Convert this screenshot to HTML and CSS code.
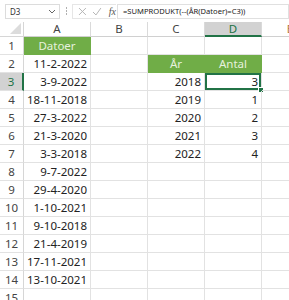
FILE: index.html
```html
<!DOCTYPE html>
<html>
<head>
<meta charset="utf-8">
<link rel="stylesheet" href="styles.css">
</head>
<body>
<div class="fbar">
  <div class="namebox"><span>D3</span>
    <svg class="chev" width="8" height="5" viewBox="0 0 8 5"><path d="M1 1 L4 4 L7 1" fill="none" stroke="#666" stroke-width="1"/></svg>
  </div>
  <div class="dots"><i></i><i></i><i></i></div>
  <div class="icons">
    <svg width="9" height="9" viewBox="0 0 9 9"><path d="M1 1 L8 8 M8 1 L1 8" stroke="#b5b5b5" stroke-width="1"/></svg>
    <svg width="10" height="9" viewBox="0 0 10 9"><path d="M1 5 L4 8 L9 1" fill="none" stroke="#b5b5b5" stroke-width="1"/></svg>
    <span class="fx">fx</span>
  </div>
  <div class="formula">=SUMPRODUKT(--(ÅR(Datoer)=C3))</div>
</div>
<div class="sheet">
  <div class="corner"><svg width="11" height="11" viewBox="0 0 11 11"><path d="M11 0 L11 11 L0 11 Z" fill="#dcdcdc"/></svg></div>
  <div class="ch">A</div><div class="ch">B</div><div class="ch">C</div><div class="ch sel">D</div><div class="ch e">E</div>

  <div class="rh">1</div><div class="c hd">Datoer</div><div class="c"></div><div class="c"></div><div class="c"></div><div class="c"></div>
  <div class="rh">2</div><div class="c r">11-2-2022</div><div class="c"></div><div class="c hd">År</div><div class="c hd">Antal</div><div class="c"></div>
  <div class="rh sel">3</div><div class="c r">3-9-2022</div><div class="c"></div><div class="c r">2018</div><div class="c r active">3<span class="handle"></span></div><div class="c"></div>
  <div class="rh">4</div><div class="c r">18-11-2018</div><div class="c"></div><div class="c r">2019</div><div class="c r">1</div><div class="c"></div>
  <div class="rh">5</div><div class="c r">27-3-2022</div><div class="c"></div><div class="c r">2020</div><div class="c r">2</div><div class="c"></div>
  <div class="rh">6</div><div class="c r">21-3-2020</div><div class="c"></div><div class="c r">2021</div><div class="c r">3</div><div class="c"></div>
  <div class="rh">7</div><div class="c r">3-3-2018</div><div class="c"></div><div class="c r">2022</div><div class="c r">4</div><div class="c"></div>
  <div class="rh">8</div><div class="c r">9-7-2022</div><div class="c"></div><div class="c"></div><div class="c"></div><div class="c"></div>
  <div class="rh">9</div><div class="c r">29-4-2020</div><div class="c"></div><div class="c"></div><div class="c"></div><div class="c"></div>
  <div class="rh">10</div><div class="c r">1-10-2021</div><div class="c"></div><div class="c"></div><div class="c"></div><div class="c"></div>
  <div class="rh">11</div><div class="c r">9-10-2018</div><div class="c"></div><div class="c"></div><div class="c"></div><div class="c"></div>
  <div class="rh">12</div><div class="c r">21-4-2019</div><div class="c"></div><div class="c"></div><div class="c"></div><div class="c"></div>
  <div class="rh">13</div><div class="c r">17-11-2021</div><div class="c"></div><div class="c"></div><div class="c"></div><div class="c"></div>
  <div class="rh">14</div><div class="c r">13-10-2021</div><div class="c"></div><div class="c"></div><div class="c"></div><div class="c"></div>
  <div class="rh">15</div><div class="c"></div><div class="c"></div><div class="c"></div><div class="c"></div><div class="c"></div>
</div>
</body>
</html>
```
FILE: styles.css
```css
html, body {
  margin: 0;
  padding: 0;
  background: #ffffff;
  overflow: hidden;
}
body {
  width: 289px;
  height: 300px;
  font-family: "Noto Sans", "Open Sans", sans-serif;
  color: #222;
}
.fbar {
  height: 22px;
  display: flex;
  align-items: center;
  background: #ffffff;
  box-sizing: border-box;
  padding-left: 5px;
}
.namebox {
  width: 55px;
  height: 15px;
  box-sizing: border-box;
  border: 1px solid #dcdcdc;
  display: flex;
  align-items: center;
  justify-content: space-between;
  padding: 0 3px 0 4px;
  font-size: 8px;
  color: #333;
}
.dots {
  display: flex;
  flex-direction: column;
  gap: 1px;
  margin: 0 5px 0 6px;
}
.dots i {
  display: block;
  width: 1px;
  height: 2px;
  background: #b0b0b0;
}
.icons {
  height: 15px;
  width: 44px;
  box-sizing: border-box;
  border: 1px solid #e6e6e6;
  border-right: none;
  display: flex;
  align-items: center;
  gap: 5px;
  padding-left: 5px;
}
.fx {
  font-family: "Liberation Serif", serif;
  font-style: italic;
  font-size: 10px;
  color: #555;
  margin-left: 2px;
}
.formula {
  flex: 1;
  height: 15px;
  box-sizing: border-box;
  border: 1px solid #e0e0e0;
  margin-left: 1px;
  font-size: 7.6px;
  line-height: 13px;
  padding-left: 5px;
  color: #222;
  white-space: nowrap;
}
.sheet {
  display: grid;
  grid-template-columns: 24px 67px 57px 57px 57px 57px;
  grid-template-rows: 15px repeat(15, 18px);
}
.corner {
  border-right: 1px solid #d6d6d6;
  border-bottom: 1px solid #d6d6d6;
  display: flex;
  align-items: flex-end;
  justify-content: flex-end;
  padding: 0 2px 2px 0;
  box-sizing: border-box;
}
.ch {
  border-right: 1px solid #dadada;
  border-bottom: 1px solid #d0d0d0;
  box-sizing: border-box;
  text-align: center;
  font-size: 11.5px;
  line-height: 14px;
  color: #444;
}
.ch.e {
  color: #b07a4a;
}
.ch.sel {
  background: #d2d2d2;
  color: #217346;
  border-bottom: 2px solid #217346;
}
.rh {
  border-right: 1px solid #d6d6d6;
  border-bottom: 1px solid #e2e2e2;
  box-sizing: border-box;
  text-align: center;
  font-size: 11.5px;
  line-height: 17px;
  color: #444;
}
.rh.sel {
  background: #d2d2d2;
  color: #217346;
  border-right: 2px solid #217346;
}
.c {
  border-right: 1px solid #e2e2e2;
  border-bottom: 1px solid #e2e2e2;
  box-sizing: border-box;
  font-size: 11.5px;
  line-height: 17px;
  padding: 0 3px;
  white-space: nowrap;
  position: relative;
}
.c.r {
  text-align: right;
}
.c.hd {
  background: #70ad47;
  color: #e6f1de;
  text-align: center;
  border-right-color: #70ad47;
  border-bottom-color: #70ad47;
}
.c.active {
  box-shadow: inset 0 0 0 2px #217346;
  padding-right: 3px;
  line-height: 17px;
}
.handle {
  position: absolute;
  right: -3px;
  bottom: -3px;
  width: 4px;
  height: 4px;
  background: #217346;
  border: 1px solid #fff;
}
```
